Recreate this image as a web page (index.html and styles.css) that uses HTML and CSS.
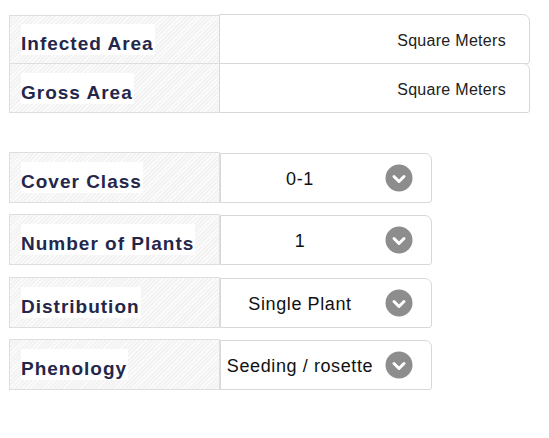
FILE: index.html
```html
<!DOCTYPE html>
<html>
<head>
<meta charset="utf-8">
<link rel="stylesheet" href="styles.css">
</head>
<body>
<div class="page">
  <div class="group group-area">
    <div class="row">
      <div class="label"><span>Infected Area</span></div>
      <div class="field"><input class="field-input" type="text"><span class="unit">Square Meters</span></div>
    </div>
    <div class="row row-joined">
      <div class="label"><span>Gross Area</span></div>
      <div class="field"><input class="field-input" type="text"><span class="unit">Square Meters</span></div>
    </div>
  </div>

  <div class="group group-selects">
    <div class="row">
      <div class="label"><span>Cover Class</span></div>
      <div class="select"><span class="select-text">0-1</span><svg class="chev" viewBox="0 0 28 28" width="28" height="28"><circle cx="14" cy="14" r="13.5" fill="#8d8d8d"/><polyline points="9,12.5 14,17.5 19,12.5" fill="none" stroke="#fff" stroke-width="3" stroke-linecap="round" stroke-linejoin="round"/></svg></div>
    </div>
    <div class="row">
      <div class="label"><span>Number of Plants</span></div>
      <div class="select"><span class="select-text">1</span><svg class="chev" viewBox="0 0 28 28" width="28" height="28"><circle cx="14" cy="14" r="13.5" fill="#8d8d8d"/><polyline points="9,12.5 14,17.5 19,12.5" fill="none" stroke="#fff" stroke-width="3" stroke-linecap="round" stroke-linejoin="round"/></svg></div>
    </div>
    <div class="row">
      <div class="label"><span>Distribution</span></div>
      <div class="select"><span class="select-text">Single Plant</span><svg class="chev" viewBox="0 0 28 28" width="28" height="28"><circle cx="14" cy="14" r="13.5" fill="#8d8d8d"/><polyline points="9,12.5 14,17.5 19,12.5" fill="none" stroke="#fff" stroke-width="3" stroke-linecap="round" stroke-linejoin="round"/></svg></div>
    </div>
    <div class="row">
      <div class="label"><span>Phenology</span></div>
      <div class="select"><span class="select-text">Seeding / rosette</span><svg class="chev" viewBox="0 0 28 28" width="28" height="28"><circle cx="14" cy="14" r="13.5" fill="#8d8d8d"/><polyline points="9,12.5 14,17.5 19,12.5" fill="none" stroke="#fff" stroke-width="3" stroke-linecap="round" stroke-linejoin="round"/></svg></div>
    </div>
  </div>
</div>
</body>
</html>
```
FILE: styles.css
```css
html, body {
  margin: 0;
  padding: 0;
  background: #fff;
}
body {
  font-family: "Liberation Sans", Arial, Helvetica, sans-serif;
}
.page {
  padding-left: 9px;
}
.group {
  display: flex;
  flex-direction: column;
}
.group-area {
  margin-top: 14px;
}
.group-selects {
  margin-top: 39px;
  gap: 11.33px;
}
.row {
  display: flex;
  align-items: flex-start;
}
.row-joined {
  margin-top: -1px;
}
.label {
  box-sizing: border-box;
  width: 211px;
  height: 50px;
  border: 1px solid #dedede;
  background-color: #f3f3f3;
  background-image: repeating-linear-gradient(135deg, rgba(255,255,255,0.75) 0 1px, rgba(255,255,255,0) 1px 3px);
  display: flex;
  align-items: center;
  padding-left: 11px;
}
.group-area .label {
  margin-top: 1px;
  height: 49px;
}
.group-area .row-joined .label {
  margin-top: 0;
  height: 50px;
}
.group-selects .label {
  height: 51px;
}
.label span {
  background: #fff;
  font-weight: bold;
  font-size: 19px;
  letter-spacing: 1px;
  line-height: 22px;
  padding: 9px 1px 0 0;
  color: #24274a;
}
.field {
  box-sizing: border-box;
  width: 311px;
  height: 50px;
  margin-left: -1px;
  border: 1px solid #d8d8d8;
  border-radius: 0 7px 3px 0;
  background: #fff;
  display: flex;
  align-items: center;
}
.field-input {
  flex: 1;
  min-width: 0;
  border: none;
  outline: none;
  background: transparent;
  height: 40px;
  padding: 0;
}
.unit {
  font-size: 16px;
  letter-spacing: 0.3px;
  color: #222;
  padding: 3px 23px 0 8px;
}
.select {
  box-sizing: border-box;
  width: 212px;
  height: 50px;
  margin-top: 1px;
  border: 1px solid #d8d8d8;
  border-radius: 0 7px 3px 0;
  background: #fff;
  display: flex;
  align-items: center;
}
.select-text {
  flex: 1;
  text-align: center;
  font-size: 18px;
  letter-spacing: 0.6px;
  color: #111;
  margin-right: 6px;
  padding-top: 3px;
  white-space: nowrap;
}
.chev {
  flex: none;
  margin-right: 18px;
  width: 28px;
  height: 28px;
}
```
